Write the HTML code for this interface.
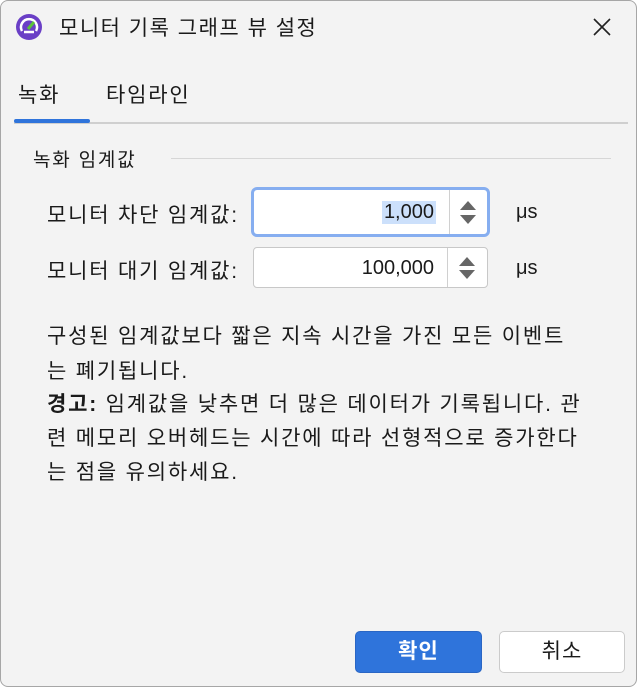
<!DOCTYPE html>
<html><head><meta charset="utf-8"><style>
*{margin:0;padding:0;box-sizing:border-box}
body{width:637px;height:687px;background:#fff;font-family:"Liberation Sans","Noto Sans CJK KR",sans-serif;color:#1a1a1a;overflow:hidden}
.win{position:absolute;left:0;top:0;width:637px;height:687px;background:#f3f3f3;border:1px solid #a6a6a6;border-radius:8px}
.a{position:absolute;white-space:nowrap}
.t{font-size:21px;letter-spacing:1.8px}
.spin{position:absolute;background:#fff;border:1px solid #c8c8c8;border-radius:4px}
.spin .v{position:absolute;right:53px;font-size:20px}
.spin .d{position:absolute;right:39px;top:0;bottom:0;width:1px;background:#d0d0d0}
.ar{position:absolute;right:12px;width:0;height:0;border-left:8px solid transparent;border-right:8px solid transparent}
.btn{position:absolute;height:42px;border-radius:5px;font-size:21px;text-align:center;line-height:40px;letter-spacing:1px}
</style></head><body><div class="win">
<svg class="a" style="left:14px;top:12px" width="28" height="28" viewBox="0 0 28 28"><circle cx="14" cy="14" r="13" fill="#6a3fc6"/><path d="M7 18a8 8 0 1 1 14 0" stroke="#fff" stroke-width="2.5" fill="none"/><path d="M9 19h10" stroke="#fff" stroke-width="2.5"/><path d="M13 16l6-7" stroke="#5cc23a" stroke-width="3"/></svg>
<div class="a t" style="left:58px;top:11px;letter-spacing:1.5px">모니터 기록 그래프 뷰 설정</div>
<svg class="a" style="left:591px;top:16px" width="20" height="20"><path d="M2 2L18 18M18 2L2 18" stroke="#222" stroke-width="1.6"/></svg>
<div class="a t" style="left:17px;top:78px">녹화</div>
<div class="a t" style="left:105px;top:78px">타임라인</div>
<div class="a" style="left:13px;top:121px;width:614px;height:2px;background:#cfcfcf"></div>
<div class="a" style="left:13px;top:118px;width:76px;height:4px;background:#2f74db;border-radius:2px"></div>
<div class="a t" style="left:32px;top:144px;font-size:19px">녹화 임계값</div>
<div class="a" style="left:170px;top:157px;width:440px;height:1px;background:#d6d6d6"></div>
<div class="a t" style="left:46px;top:198px">모니터 차단 임계값:</div>
<div class="a t" style="left:46px;top:254px">모니터 대기 임계값:</div>
<div class="spin" style="left:250px;top:186px;width:239px;height:50px;border:3px solid #86aef0;border-radius:6px">
<div class="v" style="top:11px;right:51px;background:#cce0fb;padding:0 2px">1,000</div><div class="d" style="right:37px"></div>
<div class="ar" style="top:11px;border-bottom:9px solid #666;right:11px"></div><div class="ar" style="top:25px;border-top:9px solid #666;right:11px"></div></div>
<div class="spin" style="left:252px;top:246px;width:235px;height:41px">
<div class="v" style="top:9px">100,000</div><div class="d"></div>
<div class="ar" style="top:9px;border-bottom:9px solid #666"></div><div class="ar" style="top:22px;border-top:9px solid #666"></div></div>
<div class="a" style="left:515px;top:200px;font-size:20px">μs</div>
<div class="a" style="left:515px;top:256px;font-size:20px">μs</div>
<div class="a t" style="left:46px;top:318px;line-height:35px">구성된 임계값보다 짧은 지속 시간을 가진 모든 이벤트<br>는 폐기됩니다.</div>
<div class="a t" style="left:46px;top:387px;line-height:34px"><b>경고:</b> 임계값을 낮추면 더 많은 데이터가 기록됩니다. 관<br>련 메모리 오버헤드는 시간에 따라 선형적으로 증가한다<br>는 점을 유의하세요.</div>
<div class="btn" style="left:354px;top:630px;width:127px;background:#2f74db;border:1px solid #2a66c4;color:#fff;font-weight:bold">확인</div>
<div class="btn" style="left:498px;top:630px;width:126px;background:#fff;border:1px solid #cbcbcb">취소</div>
</div></body></html>
